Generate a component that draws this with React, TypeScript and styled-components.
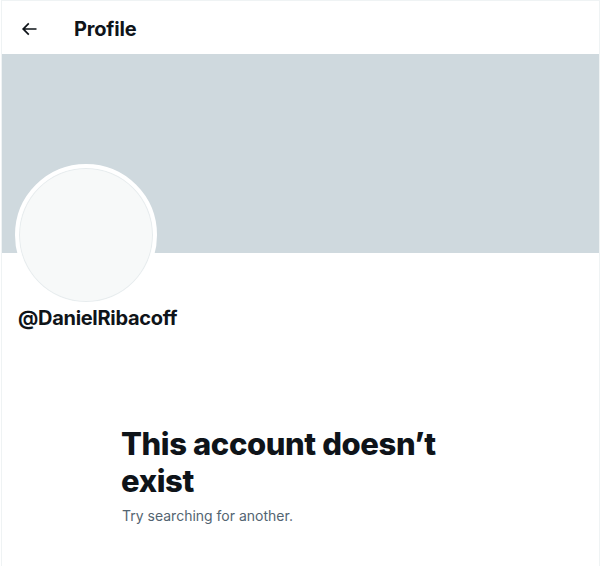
import styled, { createGlobalStyle } from "styled-components";

const GlobalStyle = createGlobalStyle`
  html, body {
    margin: 0;
    padding: 0;
    background: #ffffff;
    font-family: Inter, "Noto Sans", "Liberation Sans", sans-serif;
    color: #0f1419;
  }
`;

const Page = styled.div`
  box-sizing: border-box;
  width: 599px;
  height: 566px;
  margin-left: 1px;
  border-left: 1px solid #eff3f4;
  border-right: 1px solid #eff3f4;
  border-top: 1px solid #eff3f4;
  overflow: hidden;
`;

const Header = styled.header`
  box-sizing: border-box;
  display: flex;
  align-items: center;
  height: 53px;
  padding: 2px 16px 0;
  gap: 34px;
`;

const BackButton = styled.button`
  display: flex;
  align-items: center;
  justify-content: center;
  width: 22px;
  height: 22px;
  padding: 0;
  border: none;
  background: transparent;
  color: #0f1419;
  cursor: pointer;
`;

const Title = styled.h2`
  margin: 0;
  font-size: 20px;
  font-weight: 700;
  letter-spacing: -0.2px;
`;

const Banner = styled.div`
  height: 199px;
  background: #cfd9de;
`;

const ProfileInfo = styled.div`
  padding: 0 16px;
`;

const Avatar = styled.div`
  box-sizing: border-box;
  width: 142px;
  height: 142px;
  margin-top: -89px;
  margin-left: -3px;
  border-radius: 50%;
  border: 4px solid #ffffff;
  background: #f7f9f9;
  box-shadow: inset 0 0 0 1px #e7ecee;
`;

const Handle = styled.div`
  margin-top: 0;
  font-size: 20px;
  font-weight: 700;
  line-height: 24px;
  letter-spacing: -0.3px;
`;

const Empty = styled.div`
  margin: 95px 0 0 119px;
  max-width: 340px;
`;

const EmptyTitle = styled.h1`
  margin: 0;
  font-size: 31px;
  font-weight: 800;
  line-height: 37px;
  letter-spacing: -0.4px;
`;

const EmptyText = styled.p`
  margin: 7px 0 0 1px;
  font-size: 14px;
  line-height: 20px;
  color: #536471;
`;

const BackIcon = () => (
  <svg width="20" height="20" viewBox="0 0 24 24" aria-hidden="true">
    <path
      fill="currentColor"
      d="M7.414 13l5.043 5.04-1.414 1.42L3.586 12l7.457-7.46 1.414 1.42L7.414 11H21v2H7.414z"
    />
  </svg>
);

export default function App() {
  return (
    <>
      <GlobalStyle />
      <Page>
        <Header>
          <BackButton aria-label="Back">
            <BackIcon />
          </BackButton>
          <Title>Profile</Title>
        </Header>
        <Banner />
        <ProfileInfo>
          <Avatar />
          <Handle>@DanielRibacoff</Handle>
        </ProfileInfo>
        <Empty>
          <EmptyTitle>This account doesn’t exist</EmptyTitle>
          <EmptyText>Try searching for another.</EmptyText>
        </Empty>
      </Page>
    </>
  );
}
